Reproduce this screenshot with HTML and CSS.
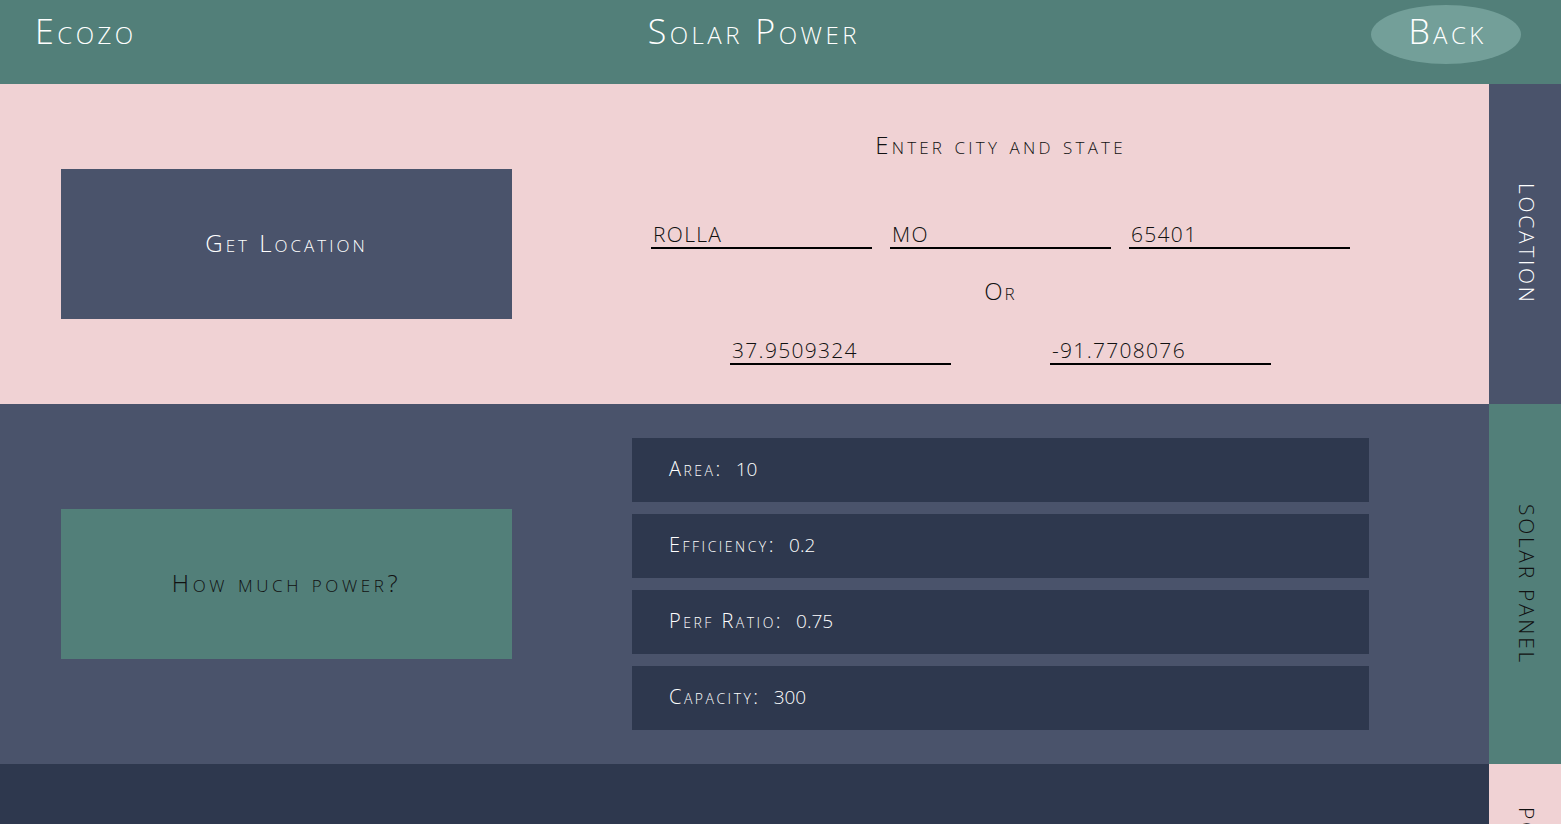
FILE: index.html
```html
<!DOCTYPE html>
<html lang="en">
<head>
<meta charset="utf-8">
<title>Ecozo - Solar Power</title>
<link rel="stylesheet" href="styles.css">
</head>
<body>
<header class="topbar">
  <div class="brand">Ecozo</div>
  <div class="title">Solar Power</div>
  <button class="back">Back</button>
</header>

<section class="row row-location">
  <div class="main">
    <div class="left">
      <button class="action action-loc">Get Location</button>
    </div>
    <div class="right right-loc">
      <div class="prompt">Enter city and state</div>
      <div class="inputs three">
        <div class="field">ROLLA</div>
        <div class="field">MO</div>
        <div class="field">65401</div>
      </div>
      <div class="or">Or</div>
      <div class="inputs two">
        <div class="field">37.9509324</div>
        <div class="field">-91.7708076</div>
      </div>
    </div>
  </div>
  <div class="tab tab-slate"><span>Location</span></div>
</section>

<section class="row row-solar">
  <div class="main">
    <div class="left">
      <button class="action action-power">How much power?</button>
    </div>
    <div class="right">
      <div class="stats">
        <div class="stat"><span class="label">Area:</span><span class="val">10</span></div>
        <div class="stat"><span class="label">Efficiency:</span><span class="val">0.2</span></div>
        <div class="stat"><span class="label">Perf Ratio:</span><span class="val">0.75</span></div>
        <div class="stat"><span class="label">Capacity:</span><span class="val">300</span></div>
      </div>
    </div>
  </div>
  <div class="tab tab-teal"><span>Solar Panel</span></div>
</section>

<section class="row row-power">
  <div class="main"></div>
  <div class="tab tab-pink"><span>Power</span></div>
</section>
</body>
</html>
```

FILE: styles.css
```css
* { box-sizing: border-box; }

html, body {
  margin: 0;
  padding: 0;
}

body {
  font-family: "Open Sans", "Lato", sans-serif;
  font-weight: 300;
  font-variant: small-caps;
  background: #2e384e;
}

.topbar {
  height: 84px;
  background: #527f79;
  display: flex;
  align-items: center;
  justify-content: space-between;
  padding: 0 40px 0 35px;
  color: #ffffff;
}

.brand, .title {
  font-size: 34px;
  letter-spacing: 3.5px;
  line-height: 40px;
  margin-top: -22px;
}

.back {
  width: 150px;
  height: 59px;
  border: none;
  border-radius: 50%;
  background: #739f99;
  color: #ffffff;
  font: inherit;
  font-variant: small-caps;
  font-size: 34px;
  letter-spacing: 3.4px;
  line-height: 40px;
  margin-top: -16px;
  padding: 0 0 6px 3px;
}

.row {
  display: flex;
}

.main {
  flex: 1;
  display: flex;
  align-items: center;
  gap: 61px;
  padding: 0 61px;
}

.left {
  width: 451px;
  flex: none;
}

.right {
  flex: 1;
  display: flex;
  flex-direction: column;
  align-items: center;
}

.right-loc {
  align-self: flex-start;
  padding-top: 46px;
}

.row-location { height: 320px; }
.row-location .main { background: #f0d2d4; }

.row-solar { height: 360px; }
.row-solar .main { background: #4a536b; }

.row-power { height: 171px; }
.row-power .main { background: #2e384e; }

.action {
  width: 451px;
  height: 150px;
  border: none;
  font: inherit;
  font-variant: small-caps;
  font-size: 24px;
  display: block;
  padding: 0 0 4px;
}

.action-loc { background: #4a536b; color: #ffffff; letter-spacing: 3px; }
.action-power { background: #527f79; color: #111111; letter-spacing: 3.6px; }

.prompt {
  font-size: 24px;
  line-height: 30px;
  letter-spacing: 3.2px;
  color: #111111;
}

.inputs {
  display: flex;
  justify-content: center;
}

.inputs.three { gap: 18px; margin-top: 61px; }
.inputs.two { gap: 99px; margin-top: 31px; }

.field {
  width: 221px;
  border-bottom: 2px solid #000000;
  font-size: 21px;
  letter-spacing: 1.3px;
  color: #111111;
  padding: 0 2px;
  line-height: 26px;
}

.or {
  font-size: 24px;
  line-height: 30px;
  letter-spacing: 2px;
  color: #111111;
  margin-top: 27px;
}

.stats {
  width: 737px;
  display: flex;
  flex-direction: column;
  gap: 12px;
}

.stat {
  height: 64px;
  background: #2e384e;
  color: #ffffff;
  display: flex;
  align-items: center;
  padding-left: 37px;
  padding-bottom: 2px;
  font-size: 20px;
}

.stat:first-child { margin-top: -1px; }

.stat .label {
  letter-spacing: 2.5px;
  margin-right: 13px;
}

.stat .val { font-size: 19px; }

.tab {
  width: 72px;
  flex: none;
  display: flex;
  align-items: center;
  justify-content: center;
}

.tab span {
  writing-mode: vertical-rl;
  text-transform: uppercase;
  font-variant: normal;
  font-size: 21px;
  letter-spacing: 2.7px;
  padding-left: 4px;
}

.tab-slate { background: #4a536b; color: #ffffff; }
.tab-teal { background: #527f79; color: #111111; }
.tab-pink { background: #f0d2d4; color: #111111; }
```
